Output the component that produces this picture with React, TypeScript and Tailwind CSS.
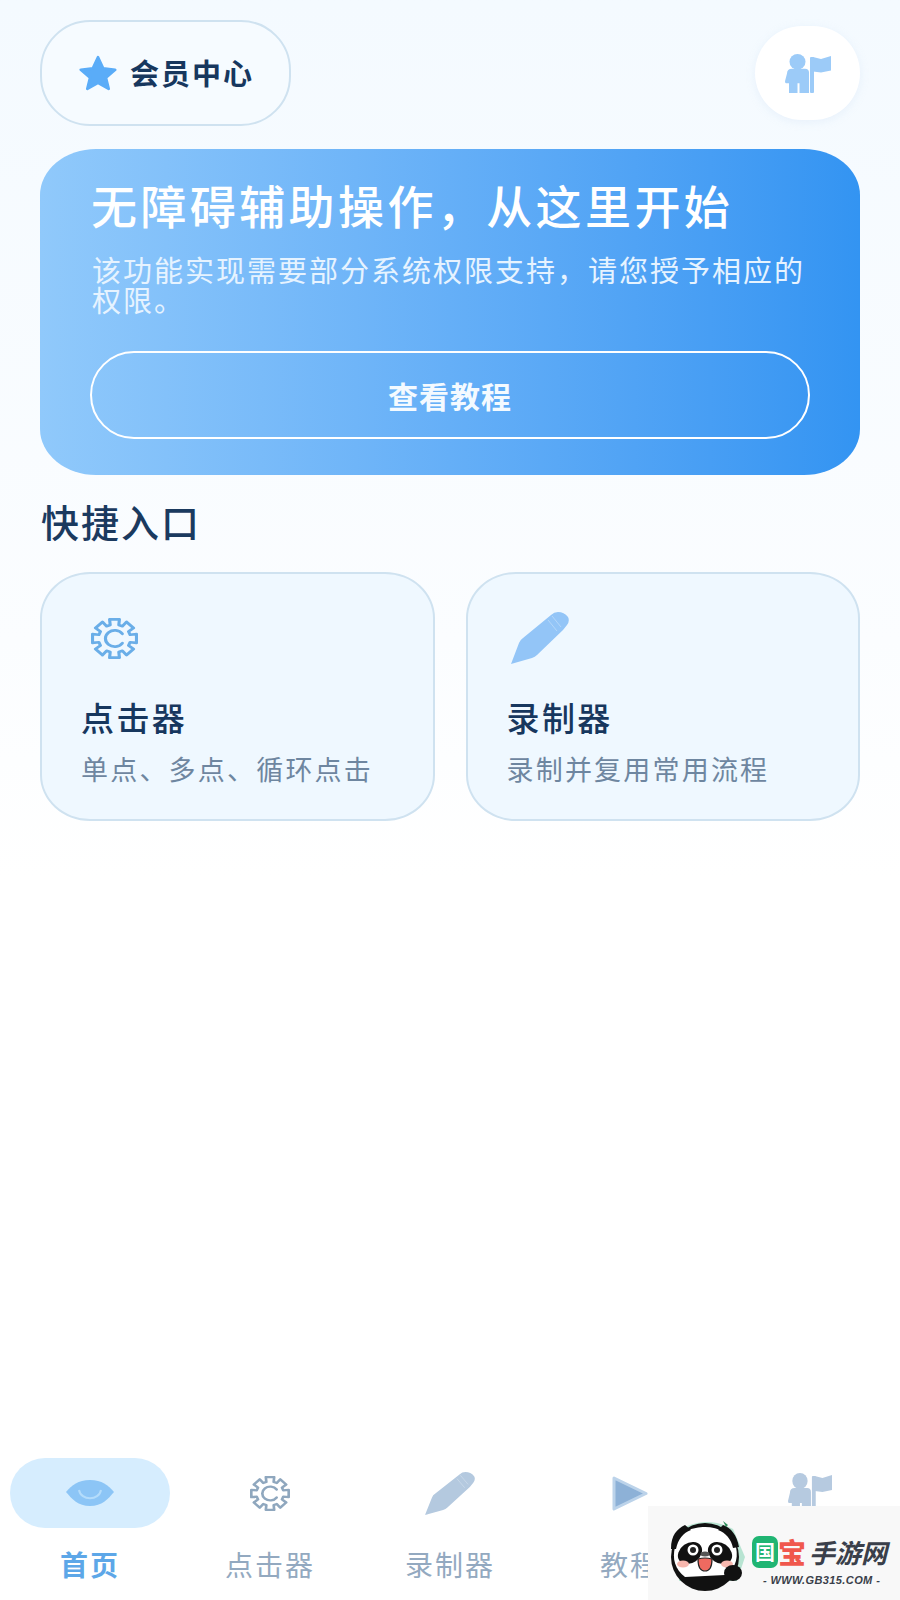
import React from 'react';

const CJK = "font-['Noto_Sans_CJK_SC','Noto_Sans',sans-serif]";

// 8 tooth gear outline, stroked rather than filled
const gearPath = (() => {
    const pts: string[] = [];
    for (let i = 0; i < 8; i++) {
        const a = (i * Math.PI) / 4 - Math.PI / 2;
        const offs: [number, number][] = [[-0.27, 16.5], [-0.22, 23], [0.22, 23], [0.27, 16.5]];
        offs.forEach(([d, r]) => {
            pts.push(`${(24 + r * Math.cos(a + d)).toFixed(2)} ${(24 + r * Math.sin(a + d)).toFixed(2)}`);
        });
    }
    return `M${pts.join('L')}Z`;
})();

const GearIcon = ({ color, w, h }: { color: string; w: number; h: number }) => (
    <svg width={w} height={h} viewBox="0 0 48 48" preserveAspectRatio="none" fill="none" stroke={color} strokeWidth="3.2" strokeLinejoin="round" strokeLinecap="round">
        <path d={gearPath} />
        <path d="M32 18.5A9.5 9.5 0 1 0 32 29.5" />
    </svg>
);

const PencilIcon = ({ color, w, h }: { color: string; w: number; h: number }) => (
    <svg width={w} height={h} viewBox="0 0 58 52" preserveAspectRatio="none">
        <path d="M0 52L8 31Q9 28 12 26L40 3Q43 0 47 0Q53 0 57 5Q59 9 56 13L52 18L26 43Q24 45 21 46Z" fill={color} />
        <path d="M41 4L50 15M37 8L46 19" stroke="#ffffff" strokeOpacity="0.3" strokeWidth="1" fill="none" />
    </svg>
);

const PersonFlagIcon = ({ color, w, h }: { color: string; w: number; h: number }) => (
    <svg width={w} height={h} viewBox="0 0 46 40" preserveAspectRatio="none" fill={color}>
        <circle cx="12.5" cy="8" r="8" />
        <path d="M2 20Q2 15 7 15H20Q24 15 24 19V40H14.5V30H12.5V40H4V30H1Q0 30 0 28Z" />
        <rect x="25" y="3" width="4" height="37" rx="1" />
        <path d="M28 3L36 5L46 2V17L36 19L28 18Z" />
    </svg>
);

const EyeIcon = () => (
    <svg width="48" height="26" viewBox="0 0 48 26">
        <path d="M0 12C6 5 12 0 24 0C36 0 42 5 48 12C42 19 36 26 24 26C12 26 6 19 0 12Z" fill="#8cc5f6" />
        <path d="M13 10C15 21 33 21 35 10" fill="none" stroke="#b4dcfb" strokeWidth="2" />
    </svg>
);

const PlayIcon = () => (
    <svg width="36" height="35" viewBox="0 0 36 35">
        <path d="M2 2L34 17.5L2 33Z" fill="#8db1d7" stroke="#bcd3ea" strokeWidth="3" strokeLinejoin="round" />
    </svg>
);

const PandaLogo = () => (
    <svg width="76" height="74" viewBox="0 0 76 74">
        <path d="M12 8Q38 -6 64 8L76 36L68 60H10Z" fill="#b8e4d2" />
        <circle cx="36" cy="36" r="34" fill="#111111" />
        <path d="M6 26C10 10 24 6 36 6C50 6 62 12 67 26C70 40 64 50 56 54L16 56C6 48 3 38 6 26Z" fill="#ffffff" />
        <path d="M2 28C2 14 8 8 16 4L22 9C14 12 9 18 7 28Z" fill="#111111" />
        <path d="M70 26C68 14 62 7 54 4L49 9C57 12 62 18 64 27Z" fill="#111111" />
        <ellipse cx="21" cy="32" rx="13" ry="10" fill="#111111" transform="rotate(-35 21 32)" />
        <ellipse cx="51" cy="32" rx="13" ry="10" fill="#111111" transform="rotate(35 51 32)" />
        <circle cx="24" cy="29" r="5.5" fill="#ffffff" />
        <circle cx="48" cy="29" r="5.5" fill="#ffffff" />
        <circle cx="24" cy="29" r="3" fill="#222222" />
        <circle cx="48" cy="29" r="3" fill="#222222" />
        <ellipse cx="36" cy="33" rx="4.5" ry="2.5" fill="#555555" />
        <path d="M29 38Q36 36 43 38Q43 50 36 50Q29 50 29 38Z" fill="#ef6a60" stroke="#222222" strokeWidth="1.2" />
        <ellipse cx="14" cy="43" rx="6" ry="3.5" fill="#f7b7ae" />
        <ellipse cx="58" cy="43" rx="6" ry="3.5" fill="#f7b7ae" />
        <ellipse cx="64" cy="52" rx="9" ry="8" fill="#111111" />
        <path d="M57 6L54 0L59 4Z" fill="#2f8f5b" />
    </svg>
);

const quickEntries = [
    { title: '点击器', desc: '单点、多点、循环点击', icon: <div className="pl-[10px] pt-[12px]"><GearIcon color="#6aaee8" w={47} h={41} /></div> },
    { title: '录制器', desc: '录制并复用常用流程', icon: <div className="pl-[4px] pt-[6px]"><PencilIcon color="#93c5f7" w={58} h={52} /></div> },
];

const navItems = [
    { label: '点击器', icon: <GearIcon color="#8fa7be" w={40} h={35} /> },
    { label: '录制器', icon: <PencilIcon color="#b4c9df" w={50} h={43} /> },
    { label: '教程', icon: <PlayIcon /> },
    { label: '', icon: <PersonFlagIcon color="#b6cae0" w={44} h={40} /> },
];

const App = () => {
    return (
        <div className={`${CJK} relative flex h-[1600px] w-[900px] flex-col overflow-hidden bg-linear-to-b from-[#f4faff] from-0% via-[#fbfdff] via-40% to-white to-55%`}>
            <main className="flex flex-1 flex-col px-[40px] pt-[20px]">
                <div className="flex items-center justify-between">
                    <div className="flex h-[106px] w-[251px] items-center gap-[13px] rounded-[50px] border-2 border-[#cfe2f0] bg-[#f6fbff] pl-[37px]">
                        <svg width="38" height="36" viewBox="0 0 41 38">
                            <path d="M20.5 2L26 14L39 15.5L29 24L32 36L20.5 29.5L9 36L12 24L2 15.5L15 14Z" fill="#5aacf8" stroke="#5aacf8" strokeWidth="3" strokeLinejoin="round" />
                        </svg>
                        <span className="text-[29px] font-bold tracking-[2px] text-[#17375e]">会员中心</span>
                    </div>
                    <div className="flex h-[94px] w-[105px] items-center justify-center rounded-full bg-white shadow-[0_2px_8px_rgba(190,215,240,0.25)]">
                        <PersonFlagIcon color="#9ccbf8" w={46} h={39} />
                    </div>
                </div>

                <section className="mt-[23px] flex h-[326px] flex-col rounded-[56px/46px] bg-linear-to-r from-[#90c9fb] to-[#3394f2] pl-[50px] pr-[50px] pt-[27px]">
                    <h1 className="pl-[1px] text-[46px] font-medium leading-[56px] tracking-[3.4px] whitespace-nowrap text-white">无障碍辅助操作，从这里开始</h1>
                    <p className="mt-[22px] pl-[2px] text-[29px] leading-[30px] tracking-[2px] text-[#e6f3ff]">该功能实现需要部分系统权限支持，请您授予相应的权限。</p>
                    <button className="mt-[37px] flex h-[88px] w-full items-center justify-center rounded-[44px] border-2 border-white text-[30px] font-bold tracking-[1px] text-[#f4faff]">查看教程</button>
                </section>

                <h2 className="mt-[20px] pl-[1px] text-[38px] font-medium leading-[52px] tracking-[2px] text-[#1b3a5f]">快捷入口</h2>

                <div className="mt-[25px] grid grid-cols-2 gap-[31px]">
                    {quickEntries.map((entry) => (
                        <div key={entry.title} className="h-[249px] rounded-[50px/46px] border-2 border-[#cfe2f0] bg-[#eff8ff] pl-[39px] pt-[32px]">
                            <div className="h-[80px]">{entry.icon}</div>
                            <div className="mt-[11px] text-[33px] font-medium leading-[40px] tracking-[2.4px] text-[#17375e]">{entry.title}</div>
                            <div className="mt-[14px] whitespace-nowrap text-[27px] leading-[36px] tracking-[2.2px] text-[#6e86a0]">{entry.desc}</div>
                        </div>
                    ))}
                </div>
            </main>

            <nav className="grid grid-cols-5 pb-[18px]">
                <div className="flex flex-col items-center">
                    <div className="flex h-[70px] w-[160px] items-center justify-center rounded-[35px] bg-[#d6edfe]">
                        <EyeIcon />
                    </div>
                    <span className="mt-[18px] h-[36px] text-[28px] font-bold leading-[36px] tracking-[2px] text-[#5da7e8]">首页</span>
                </div>
                {navItems.map((item, i) => (
                    <div key={i} className="flex flex-col items-center">
                        <div className="flex h-[70px] items-center justify-center">{item.icon}</div>
                        <span className="mt-[18px] h-[36px] text-[28px] leading-[36px] tracking-[2px] text-[#93a9c0]">{item.label}</span>
                    </div>
                ))}
            </nav>

            {/* watermark sits over the last nav column */}
            <div className="absolute bottom-0 right-0 flex h-[94px] w-[252px] bg-[#f8f8f8] pl-[21px] pt-[15px]">
                <PandaLogo />
                <div className="ml-[7px] flex flex-col pt-[15px]">
                    <div className="flex items-center leading-none">
                        <span className="flex h-[32px] w-[26px] items-center justify-center rounded-[7px] bg-[#20b573] text-[20px] font-bold text-white">国</span>
                        <span className="text-[28px] font-black leading-[32px] text-[#f0584d]">宝</span>
                        <span className="ml-[3px] text-[26px] font-bold italic leading-[32px] text-[#3a3f4a]">手游网</span>
                    </div>
                    <span className="mt-[5px] whitespace-nowrap pl-[11px] font-['Liberation_Sans',sans-serif] text-[11px] font-bold italic leading-[14px] tracking-[0.4px] text-[#3a3f4a]">- WWW.GB315.COM -</span>
                </div>
            </div>
        </div>
    );
};

export default App;
